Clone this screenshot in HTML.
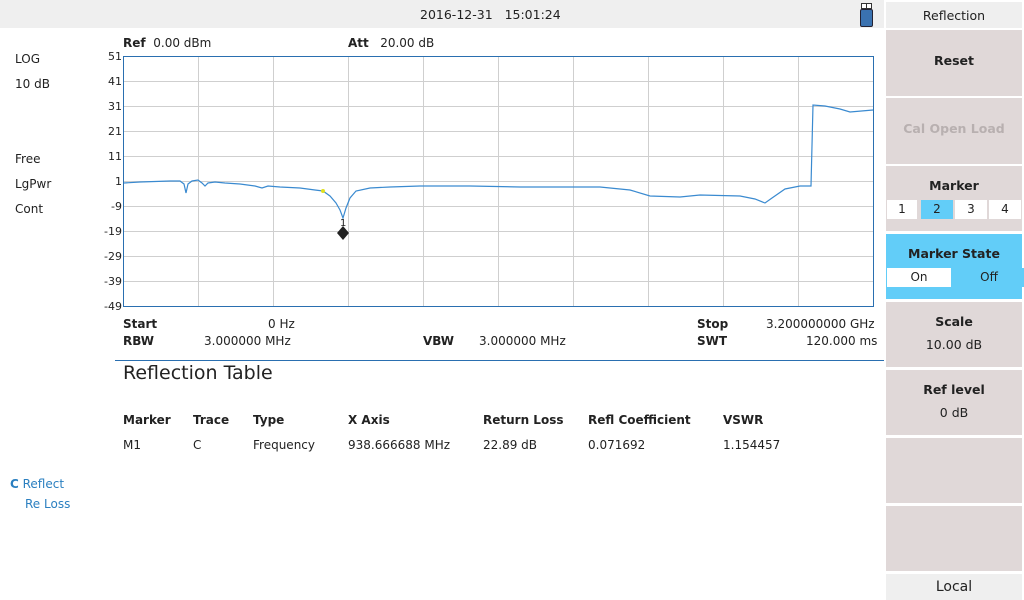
<!DOCTYPE html>
<html><head><meta charset="utf-8"><style>
body{margin:0;width:1024px;height:600px;background:#fff;font-family:"DejaVu Sans","Liberation Sans",sans-serif;font-size:12px;color:#222;position:relative;overflow:hidden}
.a{position:absolute;white-space:nowrap}
.b{font-weight:bold}
.btn{position:absolute;left:886px;width:136px;background:#e0d8d8;text-align:center;font-weight:bold;font-size:12.5px}
.sm{font-size:12px}
</style></head><body>
<div class="a" style="left:0;top:0;width:884px;height:28px;background:#efefef"></div>
<div class="a" style="left:420px;top:7px;font-size:12.5px">2016-12-31&nbsp;&nbsp;&nbsp;15:01:24</div>
<div class="a" style="left:861px;top:3px;width:4px;height:4px;border:1px solid #333;background:#fff"></div>
<div class="a" style="left:866px;top:3px;width:4px;height:4px;border:1px solid #333;background:#fff"></div>
<div class="a" style="left:860px;top:9px;width:11px;height:16px;background:#3a72b0;border:1px solid #223;border-radius:2px"></div>

<div class="a" style="left:15px;top:52px">LOG</div>
<div class="a" style="left:15px;top:77px">10 dB</div>
<div class="a" style="left:15px;top:152px">Free</div>
<div class="a" style="left:15px;top:177px">LgPwr</div>
<div class="a" style="left:15px;top:202px">Cont</div>
<div class="a" style="left:10px;top:477px;color:#2a7fc0"><b>C</b> Reflect</div>
<div class="a" style="left:25px;top:497px;color:#2a7fc0">Re Loss</div>

<div class="a" style="left:123px;top:36px"><b>Ref</b>&nbsp; 0.00 dBm</div>
<div class="a" style="left:348px;top:36px"><b>Att</b>&nbsp;&nbsp; 20.00 dB</div>

<svg class="a" style="left:0;top:0" width="884" height="320">
<g stroke="#cfcfcf" stroke-width="1">
<line x1="198.5" y1="56" x2="198.5" y2="306"/><line x1="273.5" y1="56" x2="273.5" y2="306"/><line x1="348.5" y1="56" x2="348.5" y2="306"/><line x1="423.5" y1="56" x2="423.5" y2="306"/><line x1="498.5" y1="56" x2="498.5" y2="306"/><line x1="573.5" y1="56" x2="573.5" y2="306"/><line x1="648.5" y1="56" x2="648.5" y2="306"/><line x1="723.5" y1="56" x2="723.5" y2="306"/><line x1="798.5" y1="56" x2="798.5" y2="306"/>
<line x1="123" y1="81.5" x2="873" y2="81.5"/><line x1="123" y1="106.5" x2="873" y2="106.5"/><line x1="123" y1="131.5" x2="873" y2="131.5"/><line x1="123" y1="156.5" x2="873" y2="156.5"/><line x1="123" y1="181.5" x2="873" y2="181.5"/><line x1="123" y1="206.5" x2="873" y2="206.5"/><line x1="123" y1="231.5" x2="873" y2="231.5"/><line x1="123" y1="256.5" x2="873" y2="256.5"/><line x1="123" y1="281.5" x2="873" y2="281.5"/>
</g>
<rect x="123.5" y="56.5" width="750" height="250" fill="none" stroke="#2a6fb0"/>
<g font-size="11" fill="#222" text-anchor="end" font-family="DejaVu Sans,sans-serif">
<text x="122" y="60">51</text><text x="122" y="85">41</text><text x="122" y="110">31</text><text x="122" y="135">21</text><text x="122" y="160">11</text><text x="122" y="185">1</text><text x="122" y="210">-9</text><text x="122" y="235">-19</text><text x="122" y="260">-29</text><text x="122" y="285">-39</text><text x="122" y="310">-49</text></g>
<polyline fill="none" stroke="#3a8ad0" stroke-width="1.2" points="124,183 140,182 170,181 180,181 184,184 186,193 188,184 192,181 198,180 202,183 205,186 208,183 215,182 225,183 240,184 255,186 262,188 268,186 280,187 300,188 315,190 323,191 330,196 336,203 340,210 343,218 346,208 350,198 356,191 370,188 390,187 420,186 470,186 520,187 600,187 630,190 650,196 680,197 700,195 740,196 755,199 765,203 772,198 785,189 800,186 811,186 813,105 825,106 840,109 850,112 873,110"/>
<circle cx="323" cy="191" r="2" fill="#e0e020"/>
<polygon points="343,226 349,233 343,240 337,233" fill="#222"/>
<text x="340" y="226" font-size="10" fill="#222">1</text>
</svg>

<div class="a" style="left:123px;top:317px"><b>Start</b></div>
<div class="a" style="left:268px;top:317px">0 Hz</div>
<div class="a" style="left:123px;top:334px"><b>RBW</b></div>
<div class="a" style="left:204px;top:334px">3.000000 MHz</div>
<div class="a" style="left:423px;top:334px"><b>VBW</b></div>
<div class="a" style="left:479px;top:334px">3.000000 MHz</div>
<div class="a" style="left:697px;top:317px"><b>Stop</b></div>
<div class="a" style="left:766px;top:317px">3.200000000 GHz</div>
<div class="a" style="left:697px;top:334px"><b>SWT</b></div>
<div class="a" style="left:806px;top:334px">120.000 ms</div>
<div class="a" style="left:115px;top:360px;width:769px;height:1px;background:#2a6fb0"></div>
<div class="a" style="left:123px;top:362px;font-size:19px">Reflection Table</div>
<div class="a b" style="left:123px;top:413px">Marker</div>
<div class="a b" style="left:193px;top:413px">Trace</div>
<div class="a b" style="left:253px;top:413px">Type</div>
<div class="a b" style="left:348px;top:413px">X Axis</div>
<div class="a b" style="left:483px;top:413px">Return Loss</div>
<div class="a b" style="left:588px;top:413px">Refl Coefficient</div>
<div class="a b" style="left:723px;top:413px">VSWR</div>
<div class="a" style="left:123px;top:438px">M1</div>
<div class="a" style="left:193px;top:438px">C</div>
<div class="a" style="left:253px;top:438px">Frequency</div>
<div class="a" style="left:348px;top:438px">938.666688 MHz</div>
<div class="a" style="left:483px;top:438px">22.89 dB</div>
<div class="a" style="left:588px;top:438px">0.071692</div>
<div class="a" style="left:723px;top:438px">1.154457</div>

<div class="a" style="left:884px;top:0;width:140px;height:600px;background:#fff"></div>
<div class="btn" style="top:2px;height:26px;background:#efefef;font-weight:normal;line-height:28px">Reflection</div>
<div class="btn" style="top:30px;height:66px;line-height:62px">Reset</div>
<div class="btn" style="top:98px;height:66px;line-height:62px;color:#b8b0b0">Cal Open Load</div>
<div class="btn" style="top:166px;height:65px"><div style="margin-top:12px">Marker</div></div>
<div class="a" style="left:887px;top:200px;width:30px;height:19px;background:#fff;text-align:center;line-height:19px">1</div>
<div class="a" style="left:921px;top:200px;width:32px;height:19px;background:#62cdf8;text-align:center;line-height:19px">2</div>
<div class="a" style="left:955px;top:200px;width:32px;height:19px;background:#fff;text-align:center;line-height:19px">3</div>
<div class="a" style="left:989px;top:200px;width:32px;height:19px;background:#fff;text-align:center;line-height:19px">4</div>
<div class="btn" style="top:234px;height:65px;background:#62cdf8"><div style="margin-top:12px">Marker State</div></div>
<div class="a" style="left:887px;top:268px;width:64px;height:19px;background:#fff;text-align:center;line-height:19px">On</div>
<div class="a" style="left:954px;top:268px;width:70px;height:19px;background:#62cdf8;text-align:center;line-height:19px">Off</div>
<div class="btn" style="top:302px;height:65px"><div style="margin-top:12px">Scale</div><div style="font-weight:normal;margin-top:8px">10.00 dB</div></div>
<div class="btn" style="top:370px;height:65px"><div style="margin-top:12px">Ref level</div><div style="font-weight:normal;margin-top:8px">0 dB</div></div>
<div class="btn" style="top:438px;height:65px"></div>
<div class="btn" style="top:506px;height:65px"></div>
<div class="btn" style="top:574px;height:26px;background:#efefef;font-weight:normal;font-size:14px;line-height:26px">Local</div>
</body></html>
